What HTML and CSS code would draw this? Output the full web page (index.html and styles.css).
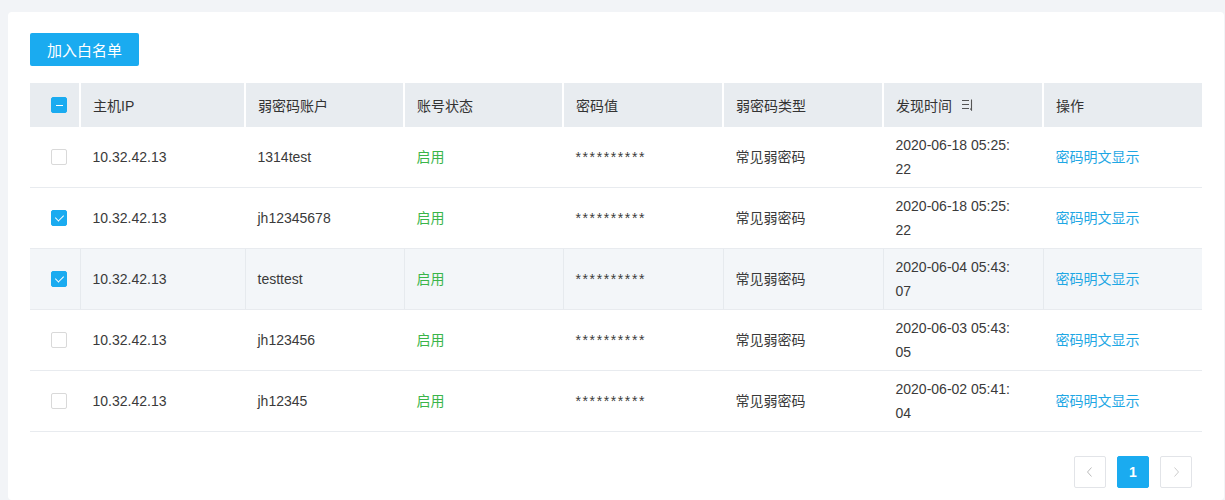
FILE: index.html
```html
<!DOCTYPE html>
<html lang="zh-CN">
<head>
<meta charset="utf-8">
<title>弱密码</title>
<link rel="stylesheet" href="styles.css">
</head>
<body>
<div class="card">
  <div class="toolbar"><button class="btn-primary">加入白名单</button></div>
  <table class="grid">
    <colgroup>
      <col class="c-check"><col class="c-ip"><col class="c-159"><col class="c-159"><col class="c-160"><col class="c-160"><col class="c-160"><col class="c-159">
    </colgroup>
    <thead>
      <tr>
        <th class="cell-check"><span class="cb cb-indeterminate"></span></th>
        <th>主机IP</th>
        <th>弱密码账户</th>
        <th>账号状态</th>
        <th>密码值</th>
        <th>弱密码类型</th>
        <th><span class="sort-head">发现时间<svg class="sort-icon" width="12" height="12" viewBox="0 0 12 12"><path d="M1 1.5h7M1 5.5h7M1 9.5h7" stroke="#555" stroke-width="1.1" fill="none"/><path d="M10.5 0.5v10.5l-1.2-1.4" stroke="#555" stroke-width="1.1" fill="none"/></svg></span></th>
        <th>操作</th>
      </tr>
    </thead>
    <tbody>
      <tr>
        <td class="cell-check"><span class="cb"></span></td>
        <td>10.32.42.13</td><td>1314test</td><td class="ok">启用</td><td class="pwd">**********</td><td>常见弱密码</td>
        <td>2020-06-18 05:25:<br>22</td><td><a class="link" href="#">密码明文显示</a></td>
      </tr>
      <tr>
        <td class="cell-check"><span class="cb cb-checked"></span></td>
        <td>10.32.42.13</td><td>jh12345678</td><td class="ok">启用</td><td class="pwd">**********</td><td>常见弱密码</td>
        <td>2020-06-18 05:25:<br>22</td><td><a class="link" href="#">密码明文显示</a></td>
      </tr>
      <tr class="hover">
        <td class="cell-check"><span class="cb cb-checked"></span></td>
        <td>10.32.42.13</td><td>testtest</td><td class="ok">启用</td><td class="pwd">**********</td><td>常见弱密码</td>
        <td>2020-06-04 05:43:<br>07</td><td><a class="link" href="#">密码明文显示</a></td>
      </tr>
      <tr>
        <td class="cell-check"><span class="cb"></span></td>
        <td>10.32.42.13</td><td>jh123456</td><td class="ok">启用</td><td class="pwd">**********</td><td>常见弱密码</td>
        <td>2020-06-03 05:43:<br>05</td><td><a class="link" href="#">密码明文显示</a></td>
      </tr>
      <tr>
        <td class="cell-check"><span class="cb"></span></td>
        <td>10.32.42.13</td><td>jh12345</td><td class="ok">启用</td><td class="pwd">**********</td><td>常见弱密码</td>
        <td>2020-06-02 05:41:<br>04</td><td><a class="link" href="#">密码明文显示</a></td>
      </tr>
    </tbody>
  </table>
  <div class="pager">
    <span class="pg pg-arrow"><svg width="12" height="12" viewBox="0 0 12 12"><path d="M7.5 1.5L3.5 6l4 4.5" stroke="#bbb" stroke-width="1" fill="none"/></svg></span>
    <span class="pg pg-active">1</span>
    <span class="pg pg-arrow"><svg width="12" height="12" viewBox="0 0 12 12"><path d="M4.5 1.5L8.5 6l-4 4.5" stroke="#ccc" stroke-width="1" fill="none"/></svg></span>
  </div>
</div>
</body>
</html>
```
FILE: styles.css
```css
* { box-sizing: border-box; }
html, body { margin: 0; }
body {
  background: #f2f4f7;
  padding: 12px 1px 0 8px;
  font-family: "Liberation Sans", "Noto Sans CJK SC", sans-serif;
  font-size: 14px;
  color: #333;
}
.card {
  background: #fff;
  border-radius: 4px;
  padding: 21px 22px 0 22px;
  height: 488px;
  overflow: hidden;
}
.toolbar { display: flex; margin-bottom: 17px; }
.btn-primary {
  height: 33px;
  width: 109px;
  padding: 0;
  border: none;
  border-radius: 2px;
  background: #1aabf0;
  color: #fff;
  font-family: "Liberation Sans", "Noto Sans CJK SC", sans-serif;
  font-size: 15px;
}
.grid {
  width: 1172px;
  border-collapse: collapse;
  table-layout: fixed;
}
.c-check { width: 50px; }
.c-ip { width: 165px; }
.c-159 { width: 159px; }
.c-160 { width: 160px; }
.grid th {
  height: 44px;
  background: #e8ecf0;
  font-weight: normal;
  text-align: left;
  padding: 0 12px;
  border-left: 2px solid #fff;
  color: #333;
}
.grid th:first-child { border-left: none; }
.grid td {
  height: 60px;
  padding: 6px 12px;
  line-height: 24px;
  border-bottom: 1px solid #e8ebef;
  border-left: 1px solid transparent;
  color: #3a3a3a;
  vertical-align: middle;
}
.grid td:first-child { border-left: none; }
.grid tr.hover td { background: #f3f6f9; border-left-color: #e6eaee; }
.grid tr.hover td:first-child { border-left: none; }
.grid th.cell-check, .grid td.cell-check { padding: 0 0 0 21px; }
.cb {
  display: block;
  width: 16px;
  height: 16px;
  border: 1px solid #d9d9d9;
  border-radius: 2px;
  background: #fff;
  position: relative;
}
.cb-checked, .cb-indeterminate { background: #1aabf0; border-color: #1aabf0; }
.cb-checked::after {
  content: "";
  position: absolute;
  left: 4.5px; top: 2px;
  width: 4px; height: 7px;
  border: solid #fff;
  border-width: 0 1.6px 1.6px 0;
  transform: rotate(45deg);
}
.cb-indeterminate::after {
  content: "";
  position: absolute;
  left: 3.5px; top: 6.5px;
  width: 7px; height: 1.5px;
  background: #fff;
}
.ok { color: #3ab54a !important; }
.pwd { letter-spacing: 1.6px; }
.link { color: #1ea7e4; text-decoration: none; }
.sort-head { display: inline-flex; align-items: center; gap: 9px; }
.sort-icon { display: block; }
.pager {
  display: flex;
  justify-content: flex-end;
  gap: 11px;
  margin-top: 24px;
  padding-right: 10px;
}
.pg {
  width: 32px;
  height: 32px;
  display: flex;
  align-items: center;
  justify-content: center;
  border: 1px solid #e2e4e8;
  border-radius: 2px;
  background: #fff;
}
.pg-active {
  background: #1aabf0;
  border-color: #1aabf0;
  color: #fff;
  font-weight: bold;
  font-size: 14px;
}
```
